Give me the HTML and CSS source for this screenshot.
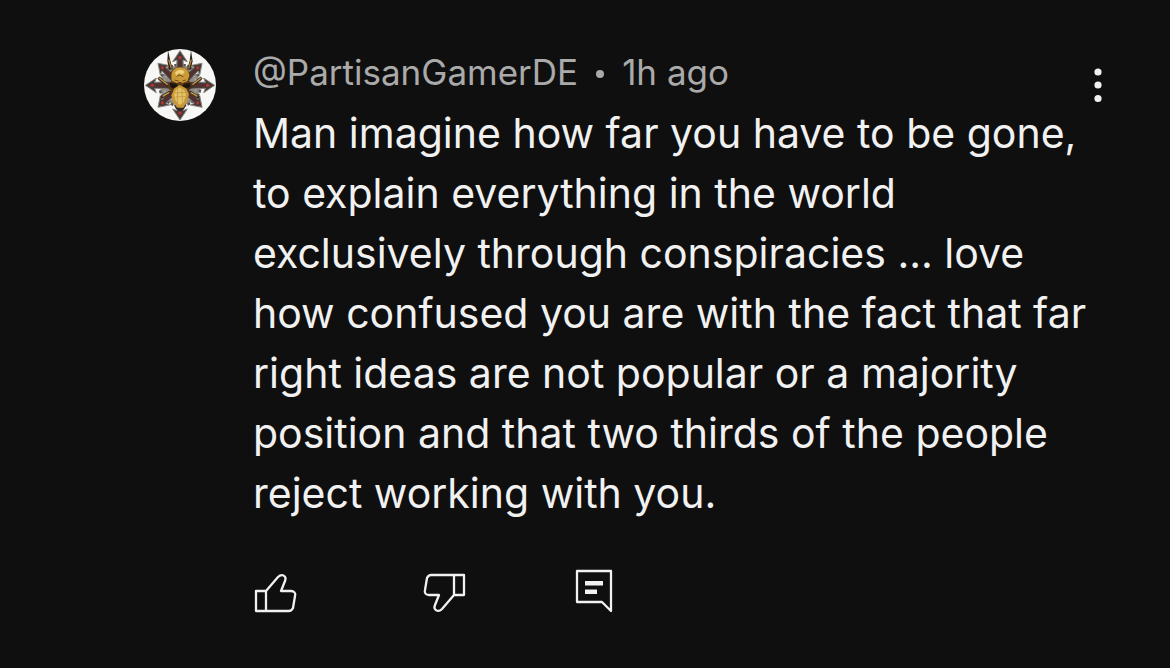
FILE: index.html
```html
<!DOCTYPE html>
<html lang="en">
<head>
    <meta charset="UTF-8">
    <title>Comment</title>
    <link rel="stylesheet" href="styles.css">
</head>
<body>
<article class="comment">
    <a class="avatar" href="#" aria-label="PartisanGamerDE">
        <svg viewBox="12 12 216 216">
            <circle cx="120" cy="120" r="108" fill="#f7f7f6"/>
            <circle cx="120" cy="121" r="60" fill="#8d8a84"/>
            <circle cx="120" cy="121" r="62" fill="none" stroke="#57524d" stroke-width="7" stroke-dasharray="9 4"/>
            <circle cx="120" cy="121" r="49" fill="none" stroke="#b5b0a6" stroke-width="4" stroke-dasharray="6 5"/>
            <!-- eight arrows of the star -->
            <g id="arms">
                <g id="arm">
                    <path d="M120 17L142 50L129 45L132 108H108L111 45L98 50Z" fill="#463a38" stroke="#8b8580" stroke-width="3"/>
                    <path d="M120 45L123 52V90H117V52Z" fill="#5e2a28"/>
                    <circle cx="120" cy="38" r="5" fill="#b93330"/>
                </g>
                <use href="#arm" transform="rotate(90 120 121)"/>
                <use href="#arm" transform="rotate(180 120 121)"/>
                <use href="#arm" transform="rotate(270 120 121)"/>
            </g>
            <use href="#arms" transform="rotate(45 120 121) translate(12 12) scale(.9)"/>
            <!-- horns -->
            <path d="M84 16L91 47L98 72L88 75L82 49ZM153 16L158 49L151 75L142 72L149 47Z" fill="#2e211b"/>
            <path d="M86 44L94 70M154 44L146 70" stroke="#b88937" stroke-width="4"/>
            <path d="M55 98L80 119L98 133M185 98L160 119L142 133M63 158L91 140M177 158L149 140" fill="none" stroke="#3a2a20" stroke-width="9"/>
            <path d="M57 99L83 119M183 99L157 119M68 154L88 142M172 154L152 142" fill="none" stroke="#c49a46" stroke-width="4"/>
            <!-- skull -->
            <path d="M91 91C91 75 104 66 120 66C137 66 149 76 150 92L146 106L157 118L143 135L137 143H103L86 132L84 118L95 108Z" fill="#5b3a15"/>
            <path d="M94 92C95 76 106 67 121 67C137 67 147 77 148 92L142 109L127 114L120 110L110 114L95 107Z" fill="#c99a37"/>
            <path d="M105 83C113 71 128 72 134 81L127 89L116 84L109 94Z" fill="#f0d27a"/>
            <path d="M89 114L109 116L116 126L104 133L91 126ZM152 114L132 116L125 126L136 133L150 126Z" fill="#1d1410"/>
            <path d="M109 94L118 90L130 95M103 105L116 108M138 105L127 108" fill="none" stroke="#78501b" stroke-width="3"/>
            <path d="M103 130L119 120L138 130L147 147L140 174L128 188H114L101 175L94 151Z" fill="#c89834"/>
            <path d="M108 134L119 128L132 134L138 149L131 171L119 180L107 167L102 150Z" fill="#e3c367"/>
            <path d="M105 144L135 142M106 156L136 154M113 132L112 174M126 132L127 172" fill="none" stroke="#bd903a" stroke-width="2"/>
            <path d="M101 178L112 189H129L139 177L132 193L120 199L108 192Z" fill="#332620"/>
        </svg>
    </a>
    <div class="content">
        <header class="meta">
            <a href="#">@PartisanGamerDE</a>
            <span class="dot"></span>
            <time>1h ago</time>
        </header>
        <p class="text">Man imagine how far you have to be gone, to explain everything in the world exclusively through conspiracies ... love how confused you are with the fact that far right ideas are not popular or a majority position and that two thirds of the people reject working with you.</p>
        <div class="actions">
            <div class="votes">
                <button type="button" aria-label="Like">
                    <svg viewBox="0 0 44 48">
                        <path d="M2 23H12V43H2ZM12 23L24 9C28 5 33 8 31 13L27 23H37C40 23 42 25 41 28L39 40C38 42 37 43 35 43H12"/>
                    </svg>
                </button>
                <button type="button" aria-label="Dislike">
                    <svg viewBox="0 0 44 48">
                        <path transform="rotate(180 22 25)" d="M2 23H12V43H2ZM12 23L24 9C28 5 33 8 31 13L27 23H37C40 23 42 25 41 28L39 40C38 42 37 43 35 43H12"/>
                    </svg>
                </button>
            </div>
            <button type="button" aria-label="Reply">
                <svg viewBox="0 0 44 48">
                    <path d="M5 3H39V43L30 34H5Z"/>
                    <path class="solid" d="M13 13H31V17.5H13ZM13 21.5H25V26H13Z"/>
                </svg>
            </button>
        </div>
    </div>
    <button class="more" type="button" aria-label="More options">
        <svg viewBox="0 0 20 40">
            <circle cx="10" cy="7" r="3.6"/>
            <circle cx="10" cy="20" r="3.6"/>
            <circle cx="10" cy="33.5" r="3.6"/>
        </svg>
    </button>
</article>
</body>
</html>
```
FILE: styles.css
```css
body{
    margin: 0;
    background: #0f0f0f;
    color: #f1f1f1;
    font-family: Inter, "Liberation Sans", sans-serif;
}
a{
    color: inherit;
    text-decoration: none;
}
button{
    padding: 0;
    border: 0;
    background: none;
    cursor: pointer;
}
svg{
    display: block;
}
.comment{
    display: flex;
    align-items: flex-start;
    padding: 48px 62px 48px 144px;
}
.avatar{
    flex: none;
    width: 72px;
    margin-top: 1px;
    margin-right: 37px;
}
.content{
    flex: 1;
    min-width: 0;
}
.meta{
    display: flex;
    align-items: center;
    gap: 18px;
    color: #aaa;
    font-size: 35px;
    line-height: 48px;
}
.dot{
    width: 8px;
    height: 8px;
    margin-top: 4px;
    border-radius: 50%;
    background: #aaa;
}
.text{
    margin: 7px 0 45px;
    font-size: 41px;
    line-height: 60px;
}
.actions,
.votes{
    display: flex;
    gap: 106px;
}
.actions{
    padding-left: 1px;
}
.votes{
    gap: 124px;
}
.actions svg{
    width: 44px;
    height: 48px;
    fill: none;
    stroke: #f1f1f1;
    stroke-width: 2.3;
    stroke-linejoin: round;
}
.actions .solid{
    fill: #f1f1f1;
    stroke: none;
}
.more{
    flex: none;
    margin-top: 17px;
}
.more svg{
    width: 20px;
    height: 40px;
    fill: #f1f1f1;
}
```
